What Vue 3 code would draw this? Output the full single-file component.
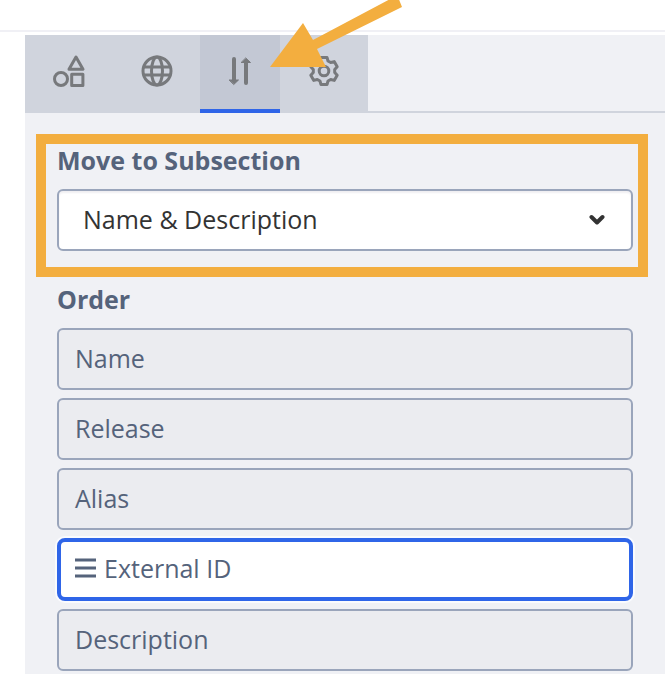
<script setup>
import { ref } from 'vue'

const tabs = [
  { id: 'fields', label: 'Fields' },
  { id: 'language', label: 'Language' },
  { id: 'order', label: 'Order' },
  { id: 'settings', label: 'Settings' },
]

const activeTab = ref('order')
const subsection = ref('Name & Description')
const selectedRow = ref('External ID')
const rows = ['Name', 'Release', 'Alias', 'External ID', 'Description']
</script>

<template>
  <div class="page">
    <div class="top-rule"></div>

    <main class="panel">
      <nav class="tab-bar">
        <div class="tabs">
          <button
            v-for="tab in tabs"
            :key="tab.id"
            type="button"
            class="tab"
            :class="{ active: activeTab === tab.id }"
            :aria-label="tab.label"
            @click="activeTab = tab.id"
          >
            <svg class="tab-icon" viewBox="0 0 36 36">
              <g v-if="tab.id === 'fields'">
                <path d="M25 4 L32 16.2 H18 Z" />
                <circle cx="10" cy="26" r="6.5" />
                <rect x="20.7" y="21.2" width="11.2" height="11.2" />
              </g>
              <g v-else-if="tab.id === 'language'">
                <circle cx="18" cy="18" r="14" />
                <ellipse cx="18" cy="18" rx="5.5" ry="14" />
                <path d="M5 14 H31 M5 22 H31" />
              </g>
              <g v-else-if="tab.id === 'order'" class="arrows">
                <path d="M12 6 V27 M24 30 V9" />
                <path class="solid" d="M7.5 27 H16.5 L12 31.3 Z M19.5 9.5 H28.5 L24 5.2 Z" />
              </g>
              <g v-else transform="translate(18 18)">
                <path
                  d="M-4 -10 L-3 -13.6 H3 L4 -10 L6.7 -8.5 L10.2 -9.4 L13.2 -4.2 L10.7 -1.5 V1.5
                     L13.2 4.2 L10.2 9.4 L6.7 8.5 L4 10 L3 13.6 H-3 L-4 10 L-6.7 8.5 L-10.2 9.4
                     L-13.2 4.2 L-10.7 1.5 V-1.5 L-13.2 -4.2 L-10.2 -9.4 L-6.7 -8.5 Z"
                />
                <circle r="4.8" />
              </g>
            </svg>
          </button>
        </div>
      </nav>

      <div class="panel-body">
        <section class="group move-group">
          <label class="group-title" for="subsection">Move to Subsection</label>
          <div class="select-wrap">
            <select id="subsection" v-model="subsection" class="select">
              <option>Name &amp; Description</option>
            </select>
            <svg class="chevron" viewBox="0 0 16 12">
              <path d="M2.5 3 L8 8.5 L13.5 3" />
            </svg>
          </div>
          <div class="highlight"></div>
        </section>

        <section class="group">
          <h2 class="group-title">Order</h2>
          <ul class="rows">
            <li
              v-for="row in rows"
              :key="row"
              class="row"
              :class="{ selected: row === selectedRow }"
            >
              <svg v-if="row === selectedRow" class="handle" viewBox="0 0 21 20">
                <path d="M0 2 H21 M0 10 H21 M0 18 H21" />
              </svg>
              <span>{{ row }}</span>
            </li>
          </ul>
        </section>
      </div>
    </main>

    <svg class="pointer" viewBox="0 0 134 68">
      <path d="M0 67 L33 23 L43 40 L124 -3 L128 -3 L132 7 L47 49 L56 67 Z" />
    </svg>
  </div>
</template>

<style>
body {
  margin: 0;
  background: #ffffff;
}
</style>

<style scoped>
.page {
  position: relative;
  display: flex;
  flex-direction: column;
  box-sizing: border-box;
  min-height: 100vh;
  padding-top: 30px;
  overflow: hidden;
  font-family: "Open Sans", "Noto Sans", sans-serif;
  font-size: 25px;
  line-height: 32px;
  color: #55637b;
}

.top-rule {
  height: 2px;
  margin-bottom: 3px;
  background: #f0f0f5;
}

.panel {
  flex: 1;
  margin-left: 25px;
  background: #f0f1f5;
}

/* Tabs */
.tab-bar {
  box-shadow: inset 0 -2px #d0d4dd;
}

.tabs {
  display: flex;
  max-width: 343px;
  height: 78px;
}

.tab {
  display: flex;
  flex: 1;
  align-items: center;
  justify-content: center;
  padding: 0 0 6px;
  border: 0;
  background: #d0d4dd;
  color: #77797c;
  cursor: pointer;
}

.tab.active {
  flex: 0 0 80px;
  background: #c3c8d4;
  box-shadow: inset 0 -4px #2f65e8;
}

.tab-icon {
  width: 36px;
  height: 36px;
  fill: none;
  stroke: currentColor;
  stroke-width: 3;
  stroke-linecap: round;
  stroke-linejoin: round;
}

.tab-icon .arrows {
  stroke-width: 4;
}

.tab-icon .solid {
  fill: currentColor;
  stroke-width: 1;
}

/* Form */
.panel-body {
  padding: 31px 32px 0;
}

.group + .group {
  margin-top: 32px;
}

.group-title {
  display: block;
  margin: 0 0 13px;
  font-size: 25px;
  font-weight: 700;
}

.move-group {
  position: relative;
}

.select-wrap {
  position: relative;
}

.select {
  display: block;
  box-sizing: border-box;
  width: 100%;
  height: 62px;
  padding: 0 60px 2px 24px;
  border: 2px solid #9aa5bb;
  border-radius: 6px;
  background: #ffffff;
  box-shadow: inset 0 2px 2px #f0eff2;
  font: inherit;
  color: #333333;
  appearance: none;
}

.chevron {
  position: absolute;
  top: 25px;
  right: 28px;
  width: 16px;
  height: 12px;
  fill: none;
  stroke: #333333;
  stroke-width: 4;
  stroke-linecap: round;
  stroke-linejoin: round;
  pointer-events: none;
}

.highlight {
  position: absolute;
  inset: -10px -15px -26px -21px;
  border: 10px solid #f3ae3f;
  pointer-events: none;
}

.rows {
  display: flex;
  flex-direction: column;
  gap: 8px;
  margin: 0;
  padding: 0;
  list-style: none;
}

.row {
  display: flex;
  align-items: center;
  gap: 8px;
  box-sizing: border-box;
  height: 62px;
  padding: 0 16px 2px;
  border: 2px solid #9aa5bb;
  border-radius: 6px;
  background: #ebecf0;
}

.row.selected {
  height: 63px;
  padding: 0 14px 3px;
  border: 4px solid #2f65e8;
  border-radius: 8px;
  background: #ffffff;
  box-shadow: 0 0 0 2px #fafbfe;
}

.handle {
  width: 21px;
  height: 20px;
  fill: none;
  stroke: currentColor;
  stroke-width: 3;
}

/* Callout arrow */
.pointer {
  position: absolute;
  top: 0;
  left: 270px;
  width: 134px;
  height: 68px;
  fill: #f3ae3f;
  pointer-events: none;
}
</style>
